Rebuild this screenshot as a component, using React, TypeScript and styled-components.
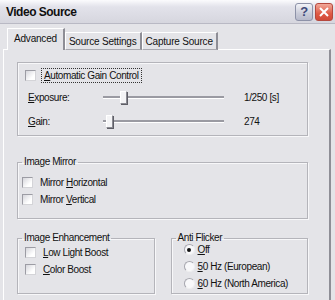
import styled, { createGlobalStyle } from "styled-components";

const GlobalStyle = createGlobalStyle`
  body {
    margin: 0;
    background: #e4e4e8;
    font-family: "Liberation Sans", Arial, sans-serif;
  }
`;

const Window = styled.div`
  width: 335px;
  height: 300px;
  overflow: hidden;
  background: #e4e4e8;
  font-size: 10px;
  letter-spacing: -0.4px;
  color: #111;
`;

const TitleBar = styled.div`
  height: 24px;
  display: flex;
  align-items: center;
  padding-left: 6px;
  padding-right: 2px;
  background: linear-gradient(#fbfbfd 0%, #e2e2ea 30%, #d6d6de 100%);
  border-bottom: 1px solid #b9b9c4;
  box-sizing: border-box;
`;

const Title = styled.div`
  flex: 1;
  font-size: 12px;
  font-weight: bold;
  letter-spacing: -0.5px;
  color: #101010;
`;

const CaptionButton = styled.div<{ $kind: "help" | "close" }>`
  width: 18px;
  height: 18px;
  margin-left: 2px;
  box-sizing: border-box;
  border-radius: 3px;
  display: flex;
  align-items: center;
  justify-content: center;
  border: 1px solid ${(p) => (p.$kind === "close" ? "#b5483e" : "#8d92a8")};
  background: ${(p) =>
    p.$kind === "close"
      ? "linear-gradient(#f1a99a, #df5a45 60%, #d14a37)"
      : "linear-gradient(#f2f3f8, #c9cbd8 60%, #b7bacb)"};
  color: ${(p) => (p.$kind === "close" ? "#fff" : "#3d4a7a")};
  font-weight: bold;
  font-size: 13px;
`;

const Content = styled.div`
  padding: 5px 4px 0 3px;
`;

const TabStrip = styled.div`
  display: flex;
  align-items: flex-end;
  height: 21px;
  padding-left: 4px;
  position: relative;
  z-index: 1;
  margin-bottom: -1px;
`;

const Tab = styled.div<{ $active?: boolean }>`
  height: ${(p) => (p.$active ? "22px" : "18px")};
  padding: 0 ${(p) => (p.$active ? "6px" : "3px")};
  display: flex;
  align-items: center;
  box-sizing: border-box;
  background: #e4e4e8;
  border: 1px solid #a9a9b0;
  border-bottom: ${(p) => (p.$active ? "none" : "1px solid #a9a9b0")};
  border-left-color: #fff;
  border-top-color: #fff;
  border-right: 2px solid #8e8e96;
  padding-bottom: ${(p) => (p.$active ? "3px" : "0")};
  letter-spacing: -0.2px;
  white-space: nowrap;
`;

const Panel = styled.div`
  height: 270px;
  box-sizing: border-box;
  border: 1px solid #fff;
  border-right: 2px solid #8e8e96;
  padding: 12px 21px 0 13px;
  display: flex;
  flex-direction: column;
  background: #e4e4e8;
`;

const Group = styled.fieldset<{ $h: number }>`
  margin: 0;
  padding: 0 8px 0 4px;
  height: ${(p) => p.$h}px;
  flex: none;
  box-sizing: border-box;
  border: 1px solid #b4b4ba;
  box-shadow: inset 1px 1px 0 #f7f7f9, 1px 1px 0 #f7f7f9;
  min-width: 0;
`;

const Legend = styled.legend`
  padding: 0 2px;
  margin-left: 0;
  line-height: 12px;
`;

const GroupRow = styled.div`
  display: flex;
  gap: 16px;
  & > * {
    flex: 1;
  }
`;

const CheckRow = styled.label<{ $gap?: number }>`
  display: flex;
  align-items: center;
  height: 17px;
  gap: ${(p) => p.$gap ?? 7}px;
  white-space: nowrap;
`;

const Box = styled.span`
  width: 11px;
  height: 11px;
  flex: none;
  box-sizing: border-box;
  border: 1px solid #9c9ca4;
  border-right-color: #d4d4d8;
  border-bottom-color: #d4d4d8;
  background: linear-gradient(135deg, #d6d6dc, #fff 70%);
`;

const Radio = styled.span<{ $on?: boolean }>`
  width: 11px;
  height: 11px;
  flex: none;
  box-sizing: border-box;
  border-radius: 50%;
  border: 1px solid #a6a6ae;
  border-right-color: #eeeef0;
  border-bottom-color: #eeeef0;
  background: #f8f8fa;
  display: flex;
  align-items: center;
  justify-content: center;
  &::after {
    content: "";
    width: 4px;
    height: 4px;
    border-radius: 50%;
    background: ${(p) => (p.$on ? "#111" : "transparent")};
  }
`;

const Focus = styled.span`
  outline: 1px dotted #333;
  outline-offset: 1px;
  padding: 0 1px;
`;

const SliderGrid = styled.div`
  display: grid;
  grid-template-columns: 75px 121px 1fr;
  row-gap: 7px;
  align-items: center;
  margin-top: 5px;
  padding-left: 6px;
`;

const Value = styled.span`
  padding-left: 20px;
  white-space: nowrap;
`;

const Track = styled.div`
  height: 17px;
  position: relative;
  &::before {
    content: "";
    position: absolute;
    left: 0;
    right: 0;
    top: 7px;
    height: 2px;
    background: #9a9aa2;
    border-bottom: 1px solid #fff;
  }
`;

const Thumb = styled.div`
  position: absolute;
  top: 2px;
  width: 5px;
  height: 11px;
  background: #f4f4f6;
  border: 1px solid #8a8a92;
  border-top-color: #fff;
  border-left-color: #fff;
  box-shadow: 1px 1px 0 #5e5e66;
`;

const Slot = styled.div<{ $top: number; $left?: number }>`
  display: flex;
  flex-direction: column;
  margin-top: ${(p) => p.$top}px;
  padding-left: ${(p) => p.$left ?? 0}px;
`;

const Spacer = styled.div<{ $h: number }>`
  height: ${(p) => p.$h}px;
  flex: none;
`;

const U = styled.span`
  text-decoration: underline;
`;

export default function App() {
  return (
    <Window>
      <GlobalStyle />
      <TitleBar>
        <Title>Video Source</Title>
        <CaptionButton $kind="help">?</CaptionButton>
        <CaptionButton $kind="close">
          <svg width="10" height="10" viewBox="0 0 10 10">
            <path d="M1 1 L9 9 M9 1 L1 9" stroke="#fff" strokeWidth="2" />
          </svg>
        </CaptionButton>
      </TitleBar>
      <Content>
        <TabStrip>
          <Tab $active>Advanced</Tab>
          <Tab>Source Settings</Tab>
          <Tab>Capture Source</Tab>
        </TabStrip>
        <Panel>
          <Group $h={74}>
            <Slot $top={4} $left={3}>
              <CheckRow>
                <Box />
                <Focus>
                  <U>A</U>utomatic Gain Control
                </Focus>
              </CheckRow>
            </Slot>
            <SliderGrid>
              <span>
                <U>E</U>xposure:
              </span>
              <Track>
                <Thumb style={{ left: 17 }} />
              </Track>
              <Value>1/250 [s]</Value>
              <span>
                <U>G</U>ain:
              </span>
              <Track>
                <Thumb style={{ left: 3 }} />
              </Track>
              <Value>274</Value>
            </SliderGrid>
          </Group>
          <Spacer $h={20} />
          <Group $h={63}>
            <Legend>Image Mirror</Legend>
            <Slot $top={6}>
              <CheckRow>
                <Box />
                <span>
                  Mirror <U>H</U>orizontal
                </span>
              </CheckRow>
              <CheckRow>
                <Box />
                <span>
                  Mirror <U>V</U>ertical
                </span>
              </CheckRow>
            </Slot>
          </Group>
          <Spacer $h={13} />
          <GroupRow>
            <Group $h={62}>
              <Legend>Image Enhancement</Legend>
              <Slot $top={0} $left={3}>
                <CheckRow>
                  <Box />
                  <span>
                    <U>L</U>ow Light Boost
                  </span>
                </CheckRow>
                <CheckRow>
                  <Box />
                  <span>
                    <U>C</U>olor Boost
                  </span>
                </CheckRow>
              </Slot>
            </Group>
            <Group $h={62}>
              <Legend>Anti Flicker</Legend>
              <Slot $top={-3} $left={8}>
                <CheckRow $gap={3}>
                  <Radio $on />
                  <span>
                    <U>O</U>ff
                  </span>
                </CheckRow>
                <CheckRow $gap={3}>
                  <Radio />
                  <span>
                    <U>5</U>0 Hz (European)
                  </span>
                </CheckRow>
                <CheckRow $gap={3}>
                  <Radio />
                  <span>
                    <U>6</U>0 Hz (North America)
                  </span>
                </CheckRow>
              </Slot>
            </Group>
          </GroupRow>
        </Panel>
      </Content>
    </Window>
  );
}
